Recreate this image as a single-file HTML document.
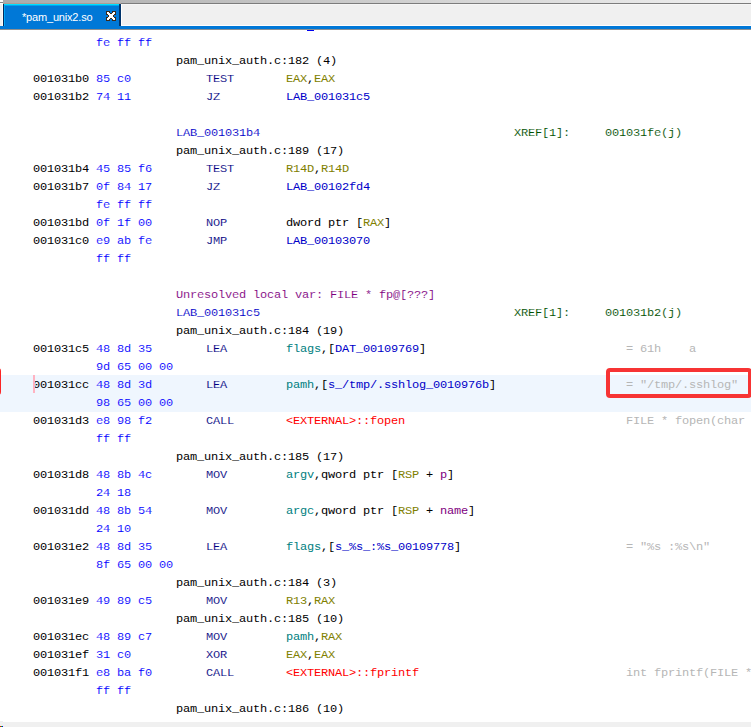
<!DOCTYPE html>
<html lang="en"><head><meta charset="utf-8"><title>pam_unix2.so listing</title>
<style>
html,body{margin:0;padding:0;background:#fff;}
#app{position:relative;width:751px;height:727px;overflow:hidden;background:#fff;}
#topbar{position:absolute;left:0;top:0;width:751px;height:30px;background:#f0f0f0;}
#topbar .grad{position:absolute;left:3px;top:0;right:0;height:3px;background:linear-gradient(to right,#ababab 0%,#f0f0f0 100%);}
#topbar .dline{position:absolute;left:121px;top:3px;right:0;height:1px;background:#7c7c7c;}
#topbar .dline2{position:absolute;left:3px;top:3px;width:118px;height:1px;background:#ab9c96;}
#topbar .w2{position:absolute;left:121px;top:4px;right:0;height:1px;background:#f6f6f6;}
#topbar .w3{position:absolute;left:121px;top:4px;width:1px;height:22px;background:#fff;}
#topbar .lt{position:absolute;left:0;top:0;width:3px;height:4px;background:linear-gradient(#fafafa 0,#fafafa 2px,#858585 2px,#858585 3px,#fff 3px,#fff 4px);}
#topbar .lw{position:absolute;left:2px;top:4px;width:1px;height:22px;background:#fcfaf8;}
#topbar .wline{position:absolute;left:121px;top:25px;right:0;height:1px;background:#fff;}
#topbar .bline{position:absolute;left:0;top:26px;right:0;height:3px;background:#0078d7;}
#topbar .gline{position:absolute;left:0;top:29px;right:0;height:1px;background:#909090;}
#tab{position:absolute;left:3px;top:4px;width:118px;height:22px;background:#0078d7;box-sizing:border-box;border-left:1px solid #002a5c;border-right:2px solid #00336b;}
#tab:before{content:"";position:absolute;left:0;top:0;right:0;height:2px;background:linear-gradient(#00e0ff 0,#00e0ff 50%,#00a4ee 50%,#00a4ee 100%);}
#tab:after{content:"";position:absolute;left:0;top:1px;width:1px;bottom:0;background:#00a4f4;}
#tab .lbl{position:absolute;left:18px;top:7px;font:11px/13px "Liberation Sans",sans-serif;letter-spacing:-0.18px;color:#fff;white-space:pre;}
#tab svg{position:absolute;left:102px;top:7px;}
#listing{position:absolute;left:0;top:0;width:751px;height:727px;font-family:"Liberation Mono",monospace;font-size:12px;letter-spacing:-0.2px;}
.row{position:absolute;left:0;width:751px;height:18px;line-height:18px;white-space:pre;}
.t{position:absolute;top:1px;white-space:pre;-webkit-text-stroke:0.1px #fff;transform:scaleY(0.88);transform-origin:0 12px;}
.hl .t{-webkit-text-stroke-color:#eff6fe;}
i{font-style:normal;}
.a,.k{-webkit-text-stroke:0 !important}
.a{color:#000}.b{color:#0000ff}.m{color:#000080}.k{color:#000}.r{color:#808000}.l{color:#0000c8}
.x{color:#005000}.p{color:#800080}.v{color:#008080}.e{color:#ff0000}.c{color:#b6b6b6;-webkit-text-stroke:0 !important}
.hlbg{position:absolute;left:0;top:375px;width:751px;height:37px;background:#eff6fe;}
.cursor{position:absolute;left:33px;top:375px;width:2px;height:18px;background:#ffb3c1;}
.redbox{position:absolute;left:606px;top:368px;width:146px;height:30px;box-sizing:border-box;border:4px solid #f73434;border-radius:4px;}
.redleft{position:absolute;left:-6px;top:368px;width:7px;height:27px;background:#fb2525;border-radius:0 3px 3px 0;}
#bottom{position:absolute;left:0;top:722px;width:751px;height:5px;background:#f0f0f0;}
.frag{position:absolute;left:307px;top:30px;width:7px;height:1px;background:#0000f0;}
#bottom .n{position:absolute;left:0;top:-1px;width:3px;height:1px;background:#f0f0f0;}
#bottom .px{position:absolute;top:4px;width:1px;height:1px;}

</style></head><body>
<div id="app">
<div id="topbar">
<div class="grad"></div><div class="dline"></div><div class="dline2"></div><div class="w2"></div><div class="w3"></div><div class="lt"></div><div class="lw"></div>
<div id="tab"><span class="lbl">*pam_unix2.so</span>
<svg width="10" height="10" viewBox="0 0 10 10" shape-rendering="crispEdges"><path d="M0.5 0.5 H3 L5 2.9 L7 0.5 H9.5 V3 L7.1 5 L9.5 7 V9.5 H7 L5 7.1 L3 9.5 H0.5 V7 L2.9 5 L0.5 3 Z" fill="#fff" stroke="#3a2a1c" stroke-width="1" stroke-linejoin="miter"/></svg>
</div>
<div class="wline"></div><div class="bline"></div><div class="gline"></div>
</div>
<div class="frag"></div>

<div id="listing">
<div class="hlbg"></div>
<div class="row" style="top:33px"><span class="t b" style="left:96px">fe ff ff</span></div>
<div class="row" style="top:51px"><span class="t k" style="left:176px">pam_unix_auth.c:182 (4)</span></div>
<div class="row" style="top:69px"><span class="t a" style="left:33px">001031b0</span><span class="t b" style="left:96px">85 c0</span><span class="t m" style="left:206px">TEST</span><span class="t k" style="left:286px"><i class="r">EAX</i>,<i class="r">EAX</i></span></div>
<div class="row" style="top:87px"><span class="t a" style="left:33px">001031b2</span><span class="t b" style="left:96px">74 11</span><span class="t m" style="left:206px">JZ</span><span class="t k" style="left:286px"><i class="l">LAB_001031c5</i></span></div>
<div class="row" style="top:123px"><span class="t l" style="left:176px">LAB_001031b4</span><span class="t x" style="left:514px">XREF[1]:</span><span class="t x" style="left:605px">001031fe(j)</span></div>
<div class="row" style="top:141px"><span class="t k" style="left:176px">pam_unix_auth.c:189 (17)</span></div>
<div class="row" style="top:159px"><span class="t a" style="left:33px">001031b4</span><span class="t b" style="left:96px">45 85 f6</span><span class="t m" style="left:206px">TEST</span><span class="t k" style="left:286px"><i class="r">R14D</i>,<i class="r">R14D</i></span></div>
<div class="row" style="top:177px"><span class="t a" style="left:33px">001031b7</span><span class="t b" style="left:96px">0f 84 17</span><span class="t m" style="left:206px">JZ</span><span class="t k" style="left:286px"><i class="l">LAB_00102fd4</i></span></div>
<div class="row" style="top:195px"><span class="t b" style="left:96px">fe ff ff</span></div>
<div class="row" style="top:213px"><span class="t a" style="left:33px">001031bd</span><span class="t b" style="left:96px">0f 1f 00</span><span class="t m" style="left:206px">NOP</span><span class="t k" style="left:286px">dword ptr [<i class="r">RAX</i>]</span></div>
<div class="row" style="top:231px"><span class="t a" style="left:33px">001031c0</span><span class="t b" style="left:96px">e9 ab fe</span><span class="t m" style="left:206px">JMP</span><span class="t k" style="left:286px"><i class="l">LAB_00103070</i></span></div>
<div class="row" style="top:249px"><span class="t b" style="left:96px">ff ff</span></div>
<div class="row" style="top:285px"><span class="t p" style="left:176px">Unresolved local var: FILE * fp@[???]</span></div>
<div class="row" style="top:303px"><span class="t l" style="left:176px">LAB_001031c5</span><span class="t x" style="left:514px">XREF[1]:</span><span class="t x" style="left:605px">001031b2(j)</span></div>
<div class="row" style="top:321px"><span class="t k" style="left:176px">pam_unix_auth.c:184 (19)</span></div>
<div class="row" style="top:339px"><span class="t a" style="left:33px">001031c5</span><span class="t b" style="left:96px">48 8d 35</span><span class="t m" style="left:206px">LEA</span><span class="t k" style="left:286px"><i class="v">flags</i>,[<i class="l">DAT_00109769</i>]</span><span class="t c" style="left:626px">= 61h    a</span></div>
<div class="row" style="top:357px"><span class="t b" style="left:96px">9d 65 00 00</span></div>
<div class="row hl" style="top:375px"><span class="t a" style="left:33px">001031cc</span><span class="t b" style="left:96px">48 8d 3d</span><span class="t m" style="left:206px">LEA</span><span class="t k" style="left:286px"><i class="v">pamh</i>,[<i class="l">s_/tmp/.sshlog_0010976b</i>]</span><span class="t c" style="left:626px">= "/tmp/.sshlog"</span></div>
<div class="row" style="top:393px"><span class="t b" style="left:96px">98 65 00 00</span></div>
<div class="row" style="top:411px"><span class="t a" style="left:33px">001031d3</span><span class="t b" style="left:96px">e8 98 f2</span><span class="t m" style="left:206px">CALL</span><span class="t k" style="left:286px"><i class="e">&lt;EXTERNAL&gt;::fopen</i></span><span class="t c" style="left:626px">FILE * fopen(char *</span></div>
<div class="row" style="top:429px"><span class="t b" style="left:96px">ff ff</span></div>
<div class="row" style="top:447px"><span class="t k" style="left:176px">pam_unix_auth.c:185 (17)</span></div>
<div class="row" style="top:465px"><span class="t a" style="left:33px">001031d8</span><span class="t b" style="left:96px">48 8b 4c</span><span class="t m" style="left:206px">MOV</span><span class="t k" style="left:286px"><i class="v">argv</i>,qword ptr [<i class="r">RSP</i> + <i class="p">p</i>]</span></div>
<div class="row" style="top:483px"><span class="t b" style="left:96px">24 18</span></div>
<div class="row" style="top:501px"><span class="t a" style="left:33px">001031dd</span><span class="t b" style="left:96px">48 8b 54</span><span class="t m" style="left:206px">MOV</span><span class="t k" style="left:286px"><i class="v">argc</i>,qword ptr [<i class="r">RSP</i> + <i class="p">name</i>]</span></div>
<div class="row" style="top:519px"><span class="t b" style="left:96px">24 10</span></div>
<div class="row" style="top:537px"><span class="t a" style="left:33px">001031e2</span><span class="t b" style="left:96px">48 8d 35</span><span class="t m" style="left:206px">LEA</span><span class="t k" style="left:286px"><i class="v">flags</i>,[<i class="l">s_%s_:%s_00109778</i>]</span><span class="t c" style="left:626px">= "%s :%s\n"</span></div>
<div class="row" style="top:555px"><span class="t b" style="left:96px">8f 65 00 00</span></div>
<div class="row" style="top:573px"><span class="t k" style="left:176px">pam_unix_auth.c:184 (3)</span></div>
<div class="row" style="top:591px"><span class="t a" style="left:33px">001031e9</span><span class="t b" style="left:96px">49 89 c5</span><span class="t m" style="left:206px">MOV</span><span class="t k" style="left:286px"><i class="r">R13</i>,<i class="r">RAX</i></span></div>
<div class="row" style="top:609px"><span class="t k" style="left:176px">pam_unix_auth.c:185 (10)</span></div>
<div class="row" style="top:627px"><span class="t a" style="left:33px">001031ec</span><span class="t b" style="left:96px">48 89 c7</span><span class="t m" style="left:206px">MOV</span><span class="t k" style="left:286px"><i class="v">pamh</i>,<i class="r">RAX</i></span></div>
<div class="row" style="top:645px"><span class="t a" style="left:33px">001031ef</span><span class="t b" style="left:96px">31 c0</span><span class="t m" style="left:206px">XOR</span><span class="t k" style="left:286px"><i class="r">EAX</i>,<i class="r">EAX</i></span></div>
<div class="row" style="top:663px"><span class="t a" style="left:33px">001031f1</span><span class="t b" style="left:96px">e8 ba f0</span><span class="t m" style="left:206px">CALL</span><span class="t k" style="left:286px"><i class="e">&lt;EXTERNAL&gt;::fprintf</i></span><span class="t c" style="left:626px">int fprintf(FILE * __stream</span></div>
<div class="row" style="top:681px"><span class="t b" style="left:96px">ff ff</span></div>
<div class="row" style="top:699px"><span class="t k" style="left:176px">pam_unix_auth.c:186 (10)</span></div>
<div class="cursor"></div>
<div class="redbox"></div>
<div class="redleft"></div>
</div>
<div id="bottom"><div class="n"></div><div class="px" style="left:0;background:#f00000"></div><div class="px" style="left:1px;background:#00d000"></div><div class="px" style="left:2px;background:#0000f0"></div></div>
</div>
</body></html>
